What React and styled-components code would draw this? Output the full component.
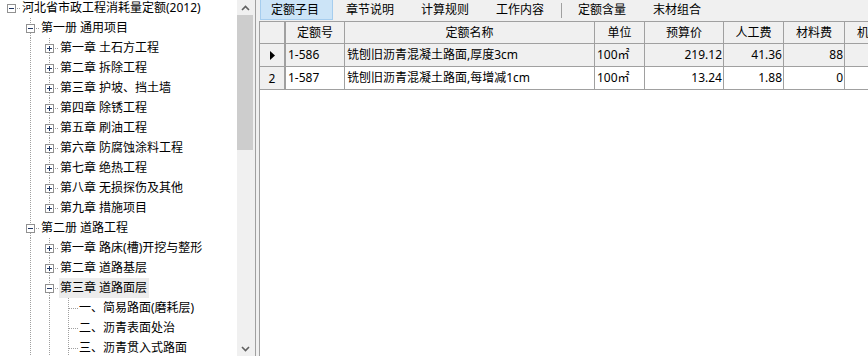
import React from 'react';
import styled, { createGlobalStyle } from 'styled-components';

const GlobalStyle = createGlobalStyle`
    html, body {
        margin: 0;
        padding: 0;
        background: #f0f0f0;
    }
    body {
        font-family: "Noto Sans", "Noto Sans CJK SC", sans-serif;
        font-size: 12px;
        color: #000;
    }
`;

const LINE = '#a0a0a0';

const Window = styled.div`
    display: flex;
    width: 868px;
    height: 356px;
    overflow: hidden;
    background: #f0f0f0;
`;

const TreePanel = styled.div`
    display: flex;
    flex: none;
    width: 253px;
    height: 100%;
`;

const TreeView = styled.div`
    flex: none;
    width: 237px;
    height: 100%;
    background: #fff;
    overflow: hidden;
`;

const TreeList = styled.div`
    margin-top: -2px;
    padding-left: 2px;
`;

const TreeRow = styled.div`
    display: flex;
    align-items: center;
    height: 20px;
    white-space: nowrap;
`;

const NodeLabel = styled.span`
    height: 20px;
    line-height: 20px;
    padding: 0 2px 0 1px;
    background: ${p => (p.$selected ? '#ececec' : 'transparent')};
`;

const ScrollBar = styled.div`
    display: flex;
    flex-direction: column;
    flex: none;
    width: 16px;
    height: 100%;
    background: #f0f0f0;
`;

const ScrollButton = styled.div`
    display: flex;
    align-items: center;
    justify-content: center;
    flex: none;
    height: 15px;
`;

const ScrollTrack = styled.div`
    flex: 1;
`;

const ScrollThumb = styled.div`
    height: 135px;
    background: #cdcdcd;
`;

const Splitter = styled.div`
    flex: none;
    width: 2px;
    border-right: 1px solid ${LINE};
    margin-right: 3px;
`;

const RightPanel = styled.div`
    display: flex;
    flex-direction: column;
    flex: 1;
    min-width: 0;
    height: 100%;
`;

const TabBar = styled.div`
    display: flex;
    align-items: center;
    flex: none;
    height: 21px;
    padding-left: 1px;
`;

const Tab = styled.div`
    box-sizing: border-box;
    flex: none;
    width: 73px;
    height: 20px;
    margin-right: 2px;
    padding-left: 10px;
    line-height: 19px;
    align-self: flex-start;
    background: ${p => (p.$active ? '#cce4f7' : 'transparent')};
    border: 1px solid ${p => (p.$active ? '#a6cdee' : 'transparent')};
    border-top: none;
`;

const TabDivider = styled.div`
    flex: none;
    width: 1px;
    height: 15px;
    margin: 0 5px 0 1px;
    background: ${LINE};
`;

const Grid = styled.div`
    flex: 1;
    background: #fff;
    border-left: 1px solid ${LINE};
    border-top: 1px solid ${LINE};
    overflow: hidden;
`;

const GridRow = styled.div`
    display: flex;
    height: ${p => (p.$header ? 21 : 22)}px;
    border-bottom: 1px solid ${LINE};
    background: ${p => (p.$header || p.$current ? '#f0f0f0' : '#fff')};
    white-space: nowrap;
`;

const Indicator = styled.div`
    display: flex;
    align-items: center;
    justify-content: center;
    flex: none;
    width: 24px;
    background: #f0f0f0;
    border-right: 2px solid ${LINE};
`;

const Cell = styled.div`
    flex: none;
    width: ${p => p.$width}px;
    box-sizing: border-box;
    padding: 0 ${p => (p.$num ? 1 : 2)}px;
    border-right: 1px solid ${LINE};
    line-height: ${p => (p.$header ? 21 : 22)}px;
    text-align: ${p => (p.$header ? 'center' : p.$num ? 'right' : 'left')};
    overflow: hidden;
`;

const columns = [
    { key: 'code', title: '定额号', width: 59 },
    { key: 'name', title: '定额名称', width: 250 },
    { key: 'unit', title: '单位', width: 50 },
    { key: 'price', title: '预算价', width: 79, num: true },
    { key: 'labor', title: '人工费', width: 60, num: true },
    { key: 'material', title: '材料费', width: 61, num: true },
    { key: 'machine', title: '机械费', width: 61, num: true },
];

const quotaRows = [
    { code: '1-586', name: '铣刨旧沥青混凝土路面,厚度3cm', unit: '100㎡', price: '219.12', labor: '41.36', material: '88', machine: '' },
    { code: '1-587', name: '铣刨旧沥青混凝土路面,每增减1cm', unit: '100㎡', price: '13.24', labor: '1.88', material: '0', machine: '' },
];

const chapters1 = [
    '第一章 土石方工程',
    '第二章 拆除工程',
    '第三章 护坡、挡土墙',
    '第四章 除锈工程',
    '第五章 刷油工程',
    '第六章 防腐蚀涂料工程',
    '第七章 绝热工程',
    '第八章 无损探伤及其他',
    '第九章 措施项目',
];

const treeRows = [
    { label: '河北省市政工程消耗量定额(2012)', kind: 'open', next: false, guides: [] },
    { label: '第一册 通用项目', kind: 'open', next: true, guides: [false] },
    ...chapters1.map((label, i) => ({
        label,
        kind: 'closed',
        next: i < chapters1.length - 1,
        guides: [false, true],
    })),
    { label: '第二册 道路工程', kind: 'open', next: true, guides: [false] },
    { label: '第一章 路床(槽)开挖与整形', kind: 'closed', next: true, guides: [false, true] },
    { label: '第二章 道路基层', kind: 'closed', next: true, guides: [false, true] },
    { label: '第三章 道路面层', kind: 'open', next: true, guides: [false, true], selected: true },
    { label: '一、简易路面(磨耗层)', kind: 'leaf', next: true, guides: [false, true, true] },
    { label: '二、沥青表面处治', kind: 'leaf', next: true, guides: [false, true, true] },
    { label: '三、沥青贯入式路面', kind: 'leaf', next: true, guides: [false, true, true] },
];

const dots = { stroke: LINE, strokeWidth: 1, strokeDasharray: '1 1' };

const Guide = ({ on }) => (
    <svg width="19" height="20" shapeRendering="crispEdges" style={{ flex: 'none' }}>
        {on && <line x1="9.5" y1="0" x2="9.5" y2="20" {...dots} />}
    </svg>
);

const Connector = ({ kind, top, next }) => {
    const leaf = kind === 'leaf';
    return (
        <svg width="19" height="20" shapeRendering="crispEdges" style={{ flex: 'none' }}>
            {top && <line x1="9.5" y1="0" x2="9.5" y2={leaf ? 10 : 6} {...dots} />}
            {next && <line x1="9.5" y1={leaf ? 10 : 15} x2="9.5" y2="20" {...dots} />}
            <line x1={leaf ? 10 : 15} y1="10.5" x2="19" y2="10.5" {...dots} />
            {!leaf && (
                <g>
                    <rect x="5.5" y="6.5" width="8" height="8" fill="#fff" stroke="#919191" />
                    <line x1="7" y1="10.5" x2="12" y2="10.5" stroke="#1f3563" />
                    {kind === 'closed' && <line x1="9.5" y1="8" x2="9.5" y2="13" stroke="#1f3563" />}
                </g>
            )}
        </svg>
    );
};

const Chevron = ({ down }) => (
    <svg width="9" height="6" viewBox="0 0 9 6">
        <polyline
            points={down ? '1,1 4.5,4.5 8,1' : '1,5 4.5,1.5 8,5'}
            fill="none"
            stroke="#606060"
            strokeWidth="1.6"
        />
    </svg>
);

const tabs = ['定额子目', '章节说明', '计算规则', '工作内容'];
const moreTabs = ['定额含量', '末材组合'];

export default function App() {
    return (
        <>
            <GlobalStyle />
            <Window>
                <TreePanel>
                    <TreeView>
                        <TreeList>
                            {treeRows.map((row, i) => (
                                <TreeRow key={i}>
                                    {row.guides.map((g, j) => (
                                        <Guide key={j} on={g} />
                                    ))}
                                    <Connector kind={row.kind} top={row.guides.length > 0} next={row.next} />
                                    <NodeLabel $selected={row.selected}>{row.label}</NodeLabel>
                                </TreeRow>
                            ))}
                        </TreeList>
                    </TreeView>
                    <ScrollBar>
                        <ScrollButton><Chevron /></ScrollButton>
                        <ScrollTrack>
                            <ScrollThumb />
                        </ScrollTrack>
                        <ScrollButton><Chevron down /></ScrollButton>
                    </ScrollBar>
                </TreePanel>
                <Splitter />
                <RightPanel>
                    <TabBar>
                        {tabs.map((t, i) => (
                            <Tab key={t} $active={i === 0}>{t}</Tab>
                        ))}
                        <TabDivider />
                        {moreTabs.map(t => (
                            <Tab key={t}>{t}</Tab>
                        ))}
                    </TabBar>
                    <Grid>
                        <GridRow $header>
                            <Indicator />
                            {columns.map(c => (
                                <Cell key={c.key} $width={c.width} $header>{c.title}</Cell>
                            ))}
                        </GridRow>
                        {quotaRows.map((r, i) => (
                            <GridRow key={r.code} $current={i === 0}>
                                <Indicator>
                                    {i === 0 ? (
                                        <svg width="5" height="9" viewBox="0 0 5 9">
                                            <polygon points="0,0 5,4.5 0,9" fill="#000" />
                                        </svg>
                                    ) : (
                                        i + 1
                                    )}
                                </Indicator>
                                {columns.map(c => (
                                    <Cell key={c.key} $width={c.width} $num={c.num}>{r[c.key]}</Cell>
                                ))}
                            </GridRow>
                        ))}
                    </Grid>
                </RightPanel>
            </Window>
        </>
    );
}
